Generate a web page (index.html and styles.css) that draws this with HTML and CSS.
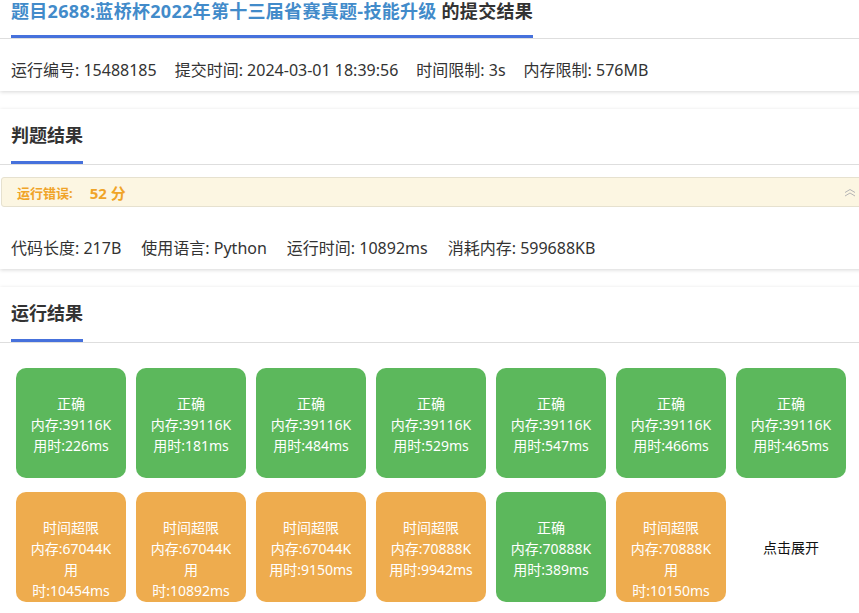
FILE: index.html
```html
<!DOCTYPE html>
<html lang="zh-CN">
<head>
<meta charset="utf-8">
<title>提交结果</title>
<link rel="stylesheet" href="styles.css">
</head>
<body>
<div class="page">
  <section class="card card-first">
    <div class="card-head">
      <h2 class="card-title"><span class="title-link">题目2688:蓝桥杯2022年第十三届省赛真题-技能升级</span>&nbsp;的提交结果</h2>
    </div>
    <div class="meta meta-top">
      <span>运行编号: 15488185</span>
      <span>提交时间: 2024-03-01 18:39:56</span>
      <span>时间限制: 3s</span>
      <span>内存限制: 576MB</span>
    </div>
  </section>

  <section class="card">
    <div class="card-head">
      <h2 class="card-title">判题结果</h2>
    </div>
    <div class="alert">
      <span class="alert-label">运行错误:</span>
      <span class="alert-score">52 分</span>
      <svg class="alert-toggle" width="12" height="9" viewBox="0 0 12 9" aria-hidden="true">
        <path d="M1 4.5L6 1.5L11 4.5M1 8L6 5L11 8" fill="none" stroke="#b5b5b5" stroke-width="1"/>
      </svg>
    </div>
    <div class="meta meta-result">
      <span>代码长度: 217B</span>
      <span>使用语言: Python</span>
      <span>运行时间: 10892ms</span>
      <span>消耗内存: 599688KB</span>
    </div>
  </section>

  <section class="card">
    <div class="card-head">
      <h2 class="card-title">运行结果</h2>
    </div>
    <div class="tests">
      <div class="tile ok">正确<br>内存:39116K<br>用时:226ms</div>
      <div class="tile ok">正确<br>内存:39116K<br>用时:181ms</div>
      <div class="tile ok">正确<br>内存:39116K<br>用时:484ms</div>
      <div class="tile ok">正确<br>内存:39116K<br>用时:529ms</div>
      <div class="tile ok">正确<br>内存:39116K<br>用时:547ms</div>
      <div class="tile ok">正确<br>内存:39116K<br>用时:466ms</div>
      <div class="tile ok">正确<br>内存:39116K<br>用时:465ms</div>
      <div class="tile tle">时间超限<br>内存:67044K<br>用时:10454ms</div>
      <div class="tile tle">时间超限<br>内存:67044K<br>用时:10892ms</div>
      <div class="tile tle">时间超限<br>内存:67044K<br>用时:9150ms</div>
      <div class="tile tle">时间超限<br>内存:70888K<br>用时:9942ms</div>
      <div class="tile ok">正确<br>内存:70888K<br>用时:389ms</div>
      <div class="tile tle">时间超限<br>内存:70888K<br>用时:10150ms</div>
      <div class="expand">点击展开</div>
    </div>
  </section>
</div>
</body>
</html>
```

FILE: styles.css
```css
html, body {
  margin: 0;
  padding: 0;
  background: #fff;
  overflow: hidden;
}

body {
  font-family: "Noto Sans", "Noto Sans CJK SC", sans-serif;
  color: #333;
}

.page {
  width: 869px;
}

.card {
  background: #fff;
  box-shadow: 0 1px 4px rgba(0, 0, 0, 0.16);
  margin-bottom: 18px;
}

.card-first {
  margin-top: -17px;
}

.card-head {
  display: flex;
  padding: 0 11px;
  border-bottom: 1px solid #dedede;
}

.card-title {
  margin: 0;
  padding: 14px 0 13px;
  font-size: 18px;
  line-height: 25px;
  font-weight: bold;
  color: #333;
  border-bottom: 3px solid #4671dc;
}

.card-first .card-title {
  padding: 16px 0 11px;
  letter-spacing: 0.3px;
}

.title-link {
  color: #428bca;
}

.meta {
  display: flex;
  gap: 18px;
  padding: 0 11px;
  font-size: 16px;
  line-height: 24px;
  color: #333;
}

.meta-top {
  padding-top: 19px;
  padding-bottom: 9px;
}

.meta-result {
  gap: 20px;
  padding-top: 29px;
  padding-bottom: 9px;
}

.alert {
  display: flex;
  align-items: center;
  height: 28px;
  margin: 12px 0 0 1px;
  padding: 0 12px 0 15px;
  background: #fcf6e2;
  border: 1px solid #e6e1cf;
  border-radius: 3px;
  color: #f0a428;
  font-weight: bold;
}

.alert-label {
  font-size: 13px;
}

.alert-score {
  font-size: 15px;
  margin-left: 17px;
}

.alert-toggle {
  margin-left: auto;
}

.tests {
  display: grid;
  grid-template-columns: repeat(7, 110px);
  grid-auto-rows: 110px;
  gap: 14px 10px;
  padding: 25px 16px 20px;
}

.tile {
  box-sizing: border-box;
  padding: 25px 12px 0;
  border-radius: 10px;
  color: #fff;
  font-size: 14px;
  line-height: 21px;
  text-align: center;
}

.tile.ok {
  background: #5cb85c;
}

.tile.tle {
  background: #eeac4e;
}

.expand {
  display: flex;
  align-items: center;
  justify-content: center;
  font-size: 14px;
  color: #111;
}
```
